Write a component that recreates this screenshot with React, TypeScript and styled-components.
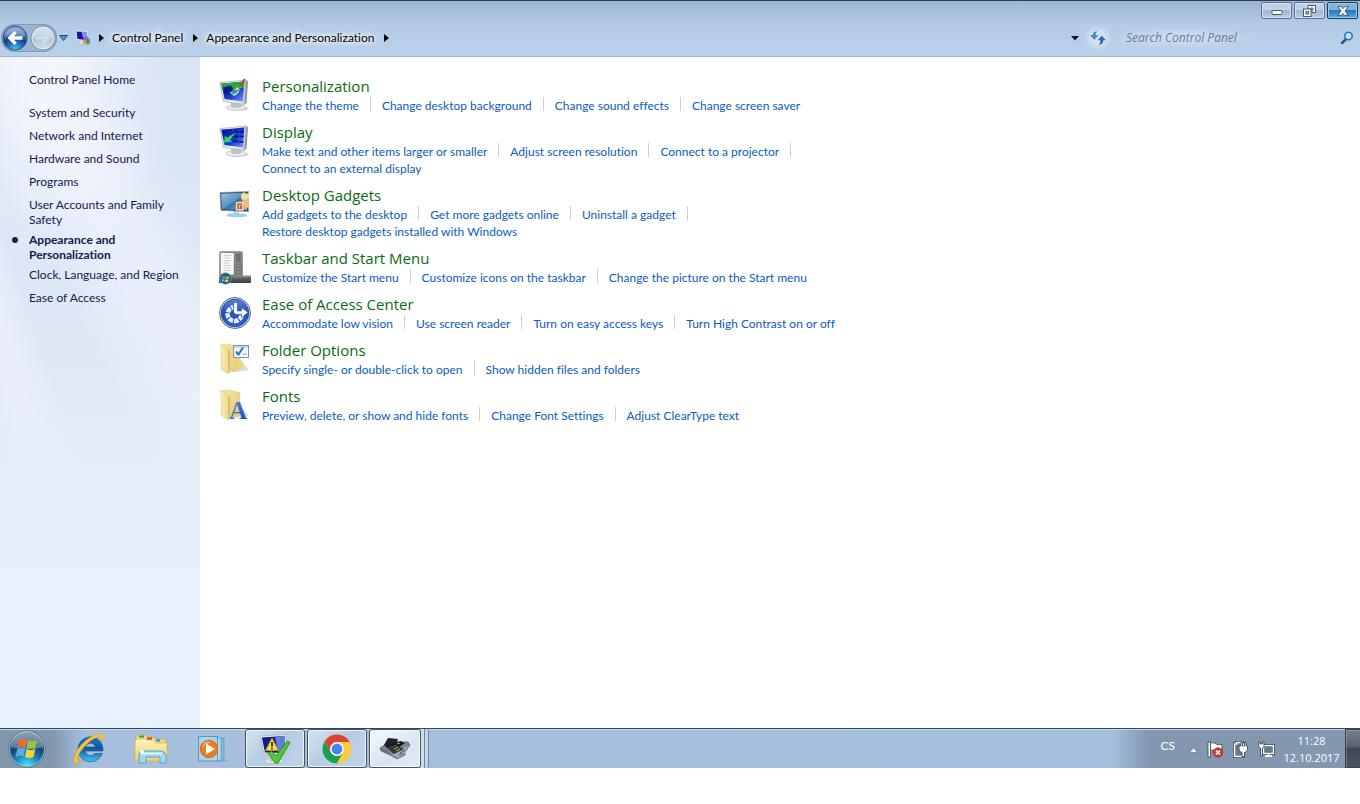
import React from "react";
import styled, { createGlobalStyle, css } from "styled-components";

const GlobalStyle = createGlobalStyle`
  * { box-sizing: border-box; }
  body { margin: 0; background: #fff; }
  body, button, input { font-family: Lato, "Open Sans", sans-serif; font-size: 12px; }
  body { font-variant-ligatures: none; }
  button { border: 0; padding: 0; background: none; color: inherit; }
  a { color: inherit; text-decoration: none; }
  a:hover { text-decoration: underline; }
  ul { list-style: none; margin: 0; padding: 0; }
  h2 { margin: 0; font-weight: 400; }
  svg { display: block; flex: none; overflow: visible; }
`;

const Page = styled.div`
  min-height: 100vh;
  display: flex;
  flex-direction: column;
  padding-bottom: 36px;
`;

const WindowHeader = styled.header`
  border-top: 1px solid #2f3a4c;
  border-bottom: 1px solid #a0b6d2;
  background: linear-gradient(#9ab4d2 0, #a9c1dd 12px, #b5cce7 24px, #b9d1ea 100%);
`;

const TitleBar = styled.div`
  display: flex;
  justify-content: flex-end;
  gap: 2px;
  height: 19px;
  padding: 1px 2px 0 0;
`;

const CaptionButton = styled.button<{ $close?: boolean }>`
  display: flex;
  align-items: center;
  justify-content: center;
  width: 31px;
  height: 17px;
  border: 1px solid ${(p) => (p.$close ? "#173c58" : "#5d728f")};
  border-radius: 2px;
  box-shadow: inset 0 0 0 1px ${(p) => (p.$close ? "#9ccbee" : "#d3e1f0")};
  background: ${(p) =>
    p.$close
      ? "linear-gradient(#7fb4dc 0 45%, #2b73b5 50%, #4fb0e8)"
      : "linear-gradient(#c0d2e7 0 45%, #a0b7d3 50%, #b7cce4)"};
`;

const NavBar = styled.nav`
  display: flex;
  align-items: center;
  height: 36px;
  padding: 0 6px 0 1px;
`;

const TravelButtons = styled.div`
  display: flex;
  margin-right: 1px;
  border-radius: 14px;
  background: #9db4d0;
  box-shadow: inset 0 0 0 1px #8199b8;
`;

const IconButton = styled.button`
  display: flex;
  align-items: center;
  justify-content: center;
`;

const RefreshButton = styled(IconButton)`
  margin-left: 11px;
  border-radius: 8px;
  background: rgba(255, 255, 255, 0.4);
  box-shadow: 0 0 5px 3px rgba(255, 255, 255, 0.4);
`;

const Crumbs = styled.div`
  display: flex;
  align-items: center;
  flex: 1;
  gap: 8px;
  margin-left: 6px;
  white-space: nowrap;
`;

const Crumb = styled.a`
  margin-right: 2px;
  color: #000;
  line-height: 16px;
  text-shadow: 0 0 4px #fff, 0 0 6px #fff, 0 0 8px #fff;
`;

const SearchBox = styled.label`
  display: flex;
  align-items: center;
  width: 234px;
  margin-left: 14px;
`;

const SearchInput = styled.input`
  flex: 1;
  min-width: 0;
  border: 0;
  outline: 0;
  padding: 0 6px;
  background: radial-gradient(ellipse 80px 11px at 60px 50%, rgba(255, 255, 255, 0.4), transparent);
  font-family: "Open Sans", sans-serif;
  line-height: 18px;
  &::placeholder {
    color: #6d7b8c;
    opacity: 1;
    font-style: italic;
  }
`;

const Body = styled.div`
  display: flex;
  flex: 1;
`;

const Sidebar = styled.aside`
  position: relative;
  isolation: isolate;
  width: 200px;
  flex: none;
  padding: 15px 12px 0 29px;
  color: #14194f;
  line-height: 15px;
  background: linear-gradient(#d9e4f5 0, #dfe9f6 45%, #e4eefa 62%, #e7f2fe 85%);
  &::before {
    content: "";
    position: absolute;
    inset: 0;
    z-index: -1;
    background:
      radial-gradient(ellipse 120px 190px at 50px 20px, rgba(246, 248, 253, 0.8), transparent),
      linear-gradient(72deg, transparent 22%, rgba(235, 239, 251, 0.8) 28% 32%, transparent 40%),
      linear-gradient(62deg, transparent 52%, rgba(234, 239, 250, 0.9) 66% 72%, transparent 84%);
    mask-image: linear-gradient(#000 50%, transparent 74%);
  }
`;

const SideList = styled.ul`
  display: flex;
  flex-direction: column;
  gap: 5px;
  margin-top: 18px;
`;

const SideItem = styled.li<{ $current?: boolean }>`
  position: relative;
  min-height: 18px;
  font-weight: ${(p) => (p.$current ? 700 : 400)};
  ${(p) =>
    p.$current &&
    css`
      max-width: 120px;
      &::before {
        content: "";
        position: absolute;
        left: -17px;
        top: 5px;
        width: 6px;
        height: 6px;
        border-radius: 50%;
        background: #1a1f52;
      }
    `}
`;

const Main = styled.main`
  flex: 1;
  min-width: 0;
  display: flex;
  flex-direction: column;
  gap: 8px;
  padding: 19px;
`;

const Category = styled.section`
  display: grid;
  grid-template-columns: 32px minmax(0, 640px);
  column-gap: 11px;
`;

const CategoryIcon = styled.div`
  padding-top: 3px;
  height: 38px;
`;

const CategoryTitle = styled.h2`
  font-family: "Open Sans", sans-serif;
  font-size: 15px;
  line-height: 21px;
  color: #0a6b12;
`;

const TaskList = styled.ul`
  display: flex;
  flex-wrap: wrap;
`;

const Task = styled.li`
  display: flex;
  height: 17px;
  line-height: 17px;
  color: #0a5cc0;
  white-space: nowrap;
  &:not(:last-child)::after {
    content: "";
    width: 1px;
    height: 14px;
    margin: 0 11px;
    background: #cfcfcf;
  }
`;

const Taskbar = styled.footer`
  display: flex;
  justify-content: space-between;
  height: 40px;
  border-top: 1px solid #34465e;
  box-shadow: inset 0 1px #c7d8ea;
  background: linear-gradient(90deg, #8296ae 0, #8296ae 52px, #a5bfdc 84px, #a5c0de calc(100% - 248px), #8397b0 calc(100% - 212px), #8397b0 100%);
`;

const TaskGroup = styled.div`
  display: flex;
  gap: 2px;
  padding-left: 1px;
`;

const TaskButton = styled.button<{ $open?: boolean; $front?: boolean; $start?: boolean }>`
  display: flex;
  align-items: center;
  justify-content: center;
  width: ${(p) => (p.$start || p.$front ? 52 : 60)}px;
  height: 39px;
  ${(p) => p.$start && "margin-right: 4px;"}
  ${(p) =>
    p.$open &&
    css`
      border: 1px solid #3f5269;
      border-radius: 3px;
      box-shadow: inset 0 0 0 1px rgba(255, 255, 255, 0.75);
      background: linear-gradient(135deg, #d6e3f1, #b6cce3 45%, #c0d3e8);
    `}
  ${(p) =>
    p.$front &&
    css`
      background: linear-gradient(150deg, #f6f9fc, #d9e4f0 60%, #e4ecf5);
      box-shadow: inset 0 0 0 1px #fff;
    `}
`;

const StackEdge = styled.span`
  width: 8px;
  height: 39px;
  margin-left: -2px;
  border-right: 1px solid #71879f;
  border-radius: 0 3px 3px 0;
  background: linear-gradient(90deg, #d0deec 3px, #6d839d 3px 4px, #c5d6e8 4px);
`;

const Tray = styled.div`
  display: flex;
  align-items: center;
  color: #fff;
`;

const Language = styled.button`
  margin: 0 14px 6px 0;
  line-height: 16px;
`;

const TrayIcons = styled.div`
  display: flex;
  align-items: center;
  gap: 9px;
  padding-top: 2px;
`;

const Clock = styled.time`
  width: 65px;
  margin-left: 4px;
  font-family: "Open Sans", sans-serif;
  font-size: 11px;
  text-align: center;
  line-height: 17px;
`;

const ShowDesktop = styled.button`
  width: 15px;
  height: 39px;
  margin-left: 1px;
  border: 1px solid #39434f;
  border-right: 0;
  box-shadow: inset 1px 1px rgba(255, 255, 255, 0.2);
  background: linear-gradient(#75808c 0, #58626e 45%, #3d4651 50%, #4b5561 100%);
`;

const BackIcon = () => (
  <svg width="28" height="28" viewBox="0 0 28 28">
    <defs>
      <radialGradient id="backFill" cx=".5" cy="1" r=".9">
        <stop offset="0" stopColor="#4fd2fa" />
        <stop offset=".35" stopColor="#1c76c8" />
        <stop offset=".6" stopColor="#123f8e" />
        <stop offset="1" stopColor="#7fa5d8" />
      </radialGradient>
    </defs>
    <circle cx="14" cy="14" r="12" fill="url(#backFill)" stroke="#2c4c7c" />
    <path d="M4 12A10.500 10.500 0 0 1 24 12Q14 16 4 12Z" fill="#fff" opacity=".25" />
    <path d="M6.500 14L13.500 7L15.800 9.300L13 12.300H21.500V15.700H13L15.800 18.700L13.500 21Z" fill="#fff" />
  </svg>
);

const ForwardIcon = () => (
  <svg width="28" height="28" viewBox="0 0 28 28">
    <defs>
      <linearGradient id="fwdFill" x1="0" y1="0" x2="0" y2="1">
        <stop offset="0" stopColor="#dbe6f1" />
        <stop offset=".48" stopColor="#c5d4e4" />
        <stop offset=".52" stopColor="#b3c5d9" />
        <stop offset="1" stopColor="#cfdeed" />
      </linearGradient>
    </defs>
    <circle cx="14" cy="14" r="12" fill="url(#fwdFill)" stroke="#7a8ca3" />
    <circle cx="14" cy="14" r="11" fill="none" stroke="#e6eef6" opacity=".8" />
    <path d="M21 14L14.500 7.500L12.500 9.500L15 12.300H6.500V15.700H15L12.500 18.500L14.500 20.500Z" fill="#d3dfeb" stroke="#b9c9da" strokeWidth=".5" />
  </svg>
);

const HistoryArrow = () => (
  <svg width="11" height="8" viewBox="0 0 11 8">
    <path d="M1.500 1.500H9.500L5.500 6.500Z" fill="#3d9fd0" stroke="#17507e" strokeLinejoin="round" />
  </svg>
);

const LocationIcon = () => (
  <svg width="16" height="16" viewBox="0 0 16 16">
    <path d="M4 11L10 10L12 14L4 14.500Z" fill="#dce1e8" stroke="#99a4b2" strokeWidth=".5" />
    <path d="M1 1L12.500 1.500L11.500 10.500L2 9.500Z" fill="#1418a8" stroke="#e7ebf2" />
    <path d="M6.500 2L12 2V6L8 8Z" fill="#7d92f2" />
    <circle cx="11" cy="9" r="2.700" fill="#a65fc2" />
    <circle cx="9.500" cy="12" r="2" fill="#e0a33c" />
    <path d="M12 8L15 10V13L12.500 15L11 12Z" fill="#36a560" />
    <path d="M12 8L15 10L12 12Z" fill="#dc4152" />
  </svg>
);

const CrumbArrow = () => (
  <svg width="5" height="8" viewBox="0 0 5 8">
    <path d="M0 0L5 4L0 8Z" fill="#000" />
  </svg>
);

const DropArrow = () => (
  <svg width="8" height="5" viewBox="0 0 8 5">
    <path d="M0 0H8L4 4.500Z" fill="#05104a" />
  </svg>
);

const RefreshIcon = () => (
  <svg width="16" height="14" viewBox="0 0 16 14">
    <path d="M6.500 .5Q3 1 3 4.500H.8L4.300 8.500L7.500 4.500H5.200Q5 2.500 6.500 .5Z" fill="#3f93d2" stroke="#2265a8" strokeWidth=".5" />
    <path d="M9.500 13.500Q13 13 13 9H15.200L11.700 5L8.500 9H10.800Q11 11.500 9.500 13.500Z" fill="#2f6dba" stroke="#1b4d93" strokeWidth=".5" />
  </svg>
);

const SearchIcon = () => (
  <svg width="14" height="14" viewBox="0 0 14 14">
    <path d="M6 8L2 12" stroke="#24589f" strokeWidth="2.500" strokeLinecap="round" />
    <circle cx="8.500" cy="5" r="3.700" fill="#c8e4f8" stroke="#2b73bd" strokeWidth="1.500" />
  </svg>
);

const MinimizeIcon = () => (
  <svg width="12" height="11" viewBox="0 0 12 11">
    <rect x="1" y="5.500" width="10" height="4" rx="1" fill="#fff" stroke="#4c5769" />
  </svg>
);

const RestoreIcon = () => (
  <svg width="13" height="12" viewBox="0 0 13 12">
    <path d="M5 .5H12.500V7.500H9V4H5Z" fill="#fff" stroke="#4c5769" />
    <path d="M7.500 3H10V5.500" fill="none" stroke="#4c5769" />
    <rect x=".5" y="4" width="7.500" height="7.500" fill="#fff" stroke="#4c5769" />
    <rect x="3" y="6.500" width="2.500" height="2.500" fill="#b7cce4" stroke="#4c5769" />
  </svg>
);

const CloseIcon = () => (
  <svg width="12" height="10" viewBox="0 0 12 10">
    <path d="M.8 .6H4.200L6 2.600L7.800 .6H11.200L8 5L11.200 9.400H7.800L6 7.400L4.200 9.400H.8L4 5Z" fill="#fff" stroke="#3b4f68" strokeWidth=".9" />
  </svg>
);

const MonitorStand = ({ id }: { id: string }) => (
  <>
    <defs>
      <linearGradient id={`${id}Frame`} x1="0" y1="0" x2="1" y2="0">
        <stop offset="0" stopColor="#d5d7da" />
        <stop offset=".5" stopColor="#f2f2f3" />
        <stop offset="1" stopColor="#d0d2d6" />
      </linearGradient>
      <linearGradient id={`${id}Screen`} x1="0" y1="0" x2="1" y2="1">
        <stop offset="0" stopColor="#060d8c" />
        <stop offset=".6" stopColor="#1a3ad2" />
        <stop offset="1" stopColor="#7fa6ff" />
      </linearGradient>
    </defs>
    <ellipse cx="19" cy="29.500" rx="11" ry="2" fill="#8f9298" opacity=".4" />
    <ellipse cx="17" cy="28.500" rx="10" ry="3" fill="#e9eaec" stroke="#b4b6ba" strokeWidth=".6" />
    <path d="M12 22H22L22.500 28Q17 30 12 28Z" fill="#c0c2c7" />
    <path d="M26 1L29 2L27.500 24L25 25.500Z" fill="#8f9299" />
    <path d="M.7 3.500L27 1L25.500 25.500L4.500 22.500Z" fill={`url(#${id}Frame)`} stroke="#a0a3a9" strokeWidth=".6" />
    <path d="M2.300 4.800L25.300 2.600L24 22.500L5.600 20Z" fill={`url(#${id}Screen)`} />
  </>
);

const PersonalizationIcon = () => (
  <svg width="32" height="32" viewBox="0 0 32 32">
    <MonitorStand id="pers" />
    <path d="M2.300 4.800L25.300 2.600L24.900 9Q22 8 19.500 12Q17 16 13 15L12 13L4 11Z" fill="#27a838" />
    <path d="M4 8.500L11.500 6.500L14 9L12.500 14L6 16Z" fill="#0d1a94" />
    <path d="M10.500 13L14 12.500L15.500 14.500L21 10Q19 17 14.500 17Z" fill="#8fe392" />
    <path d="M16 12L21 7" stroke="#e8ebf1" strokeWidth="2.200" />
    <path d="M19.500 8.500L25.500 .5" stroke="#a5473e" strokeWidth="1.700" strokeLinecap="round" />
    <path d="M12.500 15Q14 11 17.500 10.500L18.500 12Q17 14.500 12.500 15Z" fill="#5873cc" />
  </svg>
);

const DisplayIcon = () => (
  <svg width="32" height="32" viewBox="0 0 32 32">
    <MonitorStand id="disp" />
    <path d="M13 7.500L25 6.500M13 11.500L24.800 11.500M12 16L24.500 17" stroke="#081080" strokeWidth="1.500" />
    <path d="M14 4V8M20 4V20" stroke="#3458e0" strokeWidth=".7" />
    <path d="M5 17.500L6 11L8.200 12.700L17 7.500L11 14.700L13.500 16.500Z" fill="#38d47a" stroke="#1a9f65" strokeWidth=".5" />
  </svg>
);

const GadgetsIcon = () => (
  <svg width="32" height="32" viewBox="0 0 32 32">
    <defs>
      <linearGradient id="gadScreen" x1="0" y1="0" x2="1" y2="1">
        <stop offset="0" stopColor="#9cc7e4" />
        <stop offset=".5" stopColor="#5692c0" />
        <stop offset=".52" stopColor="#37729f" />
        <stop offset="1" stopColor="#7db7dc" />
      </linearGradient>
    </defs>
    <path d="M14 21H20V26H14Z" fill="#b9ddf2" />
    <path d="M9 26L25 26L28 28Q19 29.500 8 28Z" fill="#9fd2f2" stroke="#77b1d6" strokeWidth=".5" />
    <path d="M1 4.500L29.500 3.500V23.500L2 22.500Z" fill="#2b4a64" stroke="#8da4b5" strokeWidth=".7" />
    <path d="M2.200 5.700L28.200 4.800V22L3 21.200Z" fill="url(#gadScreen)" />
    <path d="M22 7L25 4L27 6L30 5V11L24 13L22 10Z" fill="#f5df8e" />
    <path d="M23 13L30 11V19L26 21Z" fill="#f1b887" />
    <rect x="17" y="14" width="7.500" height="8.500" fill="#fff5ee" stroke="#d9a58f" strokeWidth=".5" />
    <rect x="18.200" y="15.200" width="5" height="6" fill="#d9502b" />
    <path d="M19.500 19L22.500 16.500M20.500 20.500V16.500" stroke="#fbd4a2" strokeWidth=".8" />
  </svg>
);

const TaskbarIcon = () => (
  <svg width="32" height="32" viewBox="0 0 32 32">
    <defs>
      <linearGradient id="tbGray" x1="0" y1="0" x2="1" y2="1">
        <stop offset="0" stopColor="#9a9a9a" />
        <stop offset="1" stopColor="#646464" />
      </linearGradient>
      <linearGradient id="tbBar" x1="0" y1="0" x2="0" y2="1">
        <stop offset="0" stopColor="#9a9a9a" />
        <stop offset=".4" stopColor="#5c5c5c" />
        <stop offset="1" stopColor="#3f3f3f" />
      </linearGradient>
    </defs>
    <rect x=".5" y=".5" width="23" height="25" rx="1.500" fill="url(#tbGray)" stroke="#777" strokeWidth=".5" />
    <rect x="1.800" y="2" width="13" height="21.500" fill="#f6f6f6" />
    <path d="M5 4.500H12M5 7H11M5 9.500H12M5 12H10M5 14.500H12M5 17H11M5 19.500H12" stroke="#c3c6ca" strokeWidth=".8" />
    <rect x="16.500" y="2" width="5.500" height="21.500" fill="#707070" stroke="#a5a5a5" strokeWidth=".5" />
    <path d="M17.500 12H21M17.500 15H21M17.500 18H21M17.500 21H21" stroke="#b0b0b0" strokeWidth=".7" />
    <path d="M0 24.500H32V32H0Z" fill="url(#tbBar)" />
    <circle cx="6.500" cy="27.500" r="5.800" fill="#1b6288" stroke="#6cabc4" strokeWidth=".7" />
    <path d="M3.300 25.500Q5 24.500 6.200 25.300L5.800 27.600Q4.300 26.900 3 27.700Z" fill="#f0653a" />
    <path d="M6.900 25.500Q8.500 26 10.100 25.200L9.700 27.500Q8 28.400 6.500 27.700Z" fill="#9dd04b" />
    <path d="M2.800 28.500Q4.500 27.700 5.700 28.400L5.300 30.700Q4 30 2.700 30.500Z" fill="#5db4f0" />
    <path d="M6.400 28.600Q8 29.200 9.500 28.400L9.100 30.500Q7.500 31.400 6 30.700Z" fill="#fcd24b" />
  </svg>
);

const EaseIcon = () => (
  <svg width="32" height="32" viewBox="0 0 32 32">
    <defs>
      <linearGradient id="easeFill" x1="0" y1="0" x2="0" y2="1">
        <stop offset="0" stopColor="#5a83d8" />
        <stop offset=".5" stopColor="#2450b4" />
        <stop offset="1" stopColor="#2b62cf" />
      </linearGradient>
    </defs>
    <circle cx="16" cy="16" r="15.500" fill="#e1e5ee" stroke="#596783" />
    <circle cx="16" cy="16" r="13.800" fill="url(#easeFill)" stroke="#1c3c8c" strokeWidth=".8" />
    <path
      d="M22.500 18.500A7 7 0 1 1 14 10.300"
      fill="none"
      stroke="#e9eefb"
      strokeWidth="4.500"
      strokeDasharray="4.500 1"
    />
    <path d="M14.700 5.500H18.300V14H22.500V10.500L29 15.500L22.500 20.500V17.300H16.500L14.700 15.500Z" fill="#fff" stroke="#2a55b9" strokeWidth=".6" />
  </svg>
);

const FolderBase = ({ id }: { id: string }) => (
  <>
    <defs>
      <linearGradient id={`${id}Front`} x1="0" y1="0" x2="1" y2="0">
        <stop offset="0" stopColor="#f9efb9" />
        <stop offset="1" stopColor="#eed98a" />
      </linearGradient>
      <linearGradient id={`${id}Back`} x1="0" y1="0" x2="1" y2="1">
        <stop offset="0" stopColor="#f5e6a6" />
        <stop offset="1" stopColor="#e3c975" />
      </linearGradient>
    </defs>
    <path d="M12 29L24 20L30 27L19 29Z" fill="#8d8d85" opacity=".3" />
    <path d="M3 2L8 1L21 3.500V26L9 29.500Z" fill={`url(#${id}Back)`} stroke="#d6c07a" strokeWidth=".5" />
    <path d="M2 1.500L9.500 7V31L2.500 26.500Z" fill={`url(#${id}Front)`} stroke="#d6bd6a" strokeWidth=".5" />
    <path d="M9.500 7.500L11 6V28L9.500 31Z" fill="#d9bd63" />
  </>
);

const FolderOptionsIcon = () => (
  <svg width="32" height="32" viewBox="0 0 32 32">
    <FolderBase id="fo" />
    <path d="M20 15L24 19V25L19 27Z" fill="#edd67e" />
    <rect x="14.500" y="2.500" width="15" height="12" fill="#f6fafd" stroke="#8295a6" />
    <path d="M15 4H29" stroke="#bccbd8" strokeWidth="1.500" />
    <path d="M17 8.500L19.500 11.500L24 4.500" fill="none" stroke="#2a75bf" strokeWidth="2" />
    <path d="M23.500 11H28" stroke="#8fa3b4" />
  </svg>
);

const FontsIcon = () => (
  <svg width="32" height="32" viewBox="0 0 32 32">
    <FolderBase id="fn" />
    <defs>
      <linearGradient id="fnLetter" x1="0" y1="0" x2="1" y2="1">
        <stop offset="0" stopColor="#6ba0f0" />
        <stop offset="1" stopColor="#123e9e" />
      </linearGradient>
    </defs>
    <text x="10" y="30" fontFamily="Liberation Serif, serif" fontWeight="700" fontSize="25" fill="url(#fnLetter)">A</text>
  </svg>
);

const StartOrb = () => (
  <svg width="38" height="38" viewBox="0 0 38 38">
    <defs>
      <radialGradient id="orbFill" cx=".5" cy="1" r=".95">
        <stop offset="0" stopColor="#5cecff" />
        <stop offset=".35" stopColor="#1b8cbf" />
        <stop offset=".65" stopColor="#16446f" />
        <stop offset="1" stopColor="#5f7a94" />
      </radialGradient>
    </defs>
    <circle cx="19" cy="19" r="17.500" fill="url(#orbFill)" stroke="#b2d6e6" />
    <circle cx="19" cy="19" r="18.200" fill="none" stroke="#2e5474" strokeWidth=".6" />
    <path d="M3 17A16 16 0 0 1 35 17Q19 22 3 17Z" fill="#fff" opacity=".28" />
    <path d="M11 10.500Q15 7.500 19 9.500L17.500 17Q13.500 15.500 9.500 18Z" fill="#ee6b2f" />
    <path d="M20.300 10Q24.500 12 29 10L27.500 17.500Q23 20 18.800 17.700Z" fill="#93c83e" />
    <path d="M9.200 19.300Q13.300 17 17.200 18.500L15.700 26.200Q11.700 24.500 7.600 27Z" fill="#58aee6" />
    <path d="M18.500 19Q22.500 21.300 27.200 19L25.700 26.700Q21.300 29.300 17 26.800Z" fill="#fccf3b" />
  </svg>
);

const ExplorerE = () => (
  <svg width="34" height="34" viewBox="0 0 34 34">
    <defs>
      <linearGradient id="ieFill" x1="0" y1="0" x2="0" y2="1">
        <stop offset="0" stopColor="#2577c5" />
        <stop offset=".45" stopColor="#0f559f" />
        <stop offset="1" stopColor="#45c3ee" />
      </linearGradient>
    </defs>
    <path
      d="M31 19V17A12.500 12.500 0 1 0 30.300 21.500H22.800A5.300 5.300 0 0 1 13.300 19ZM13.500 15A5.200 5.200 0 0 1 23.500 15Z"
      fill="url(#ieFill)"
      fillRule="evenodd"
      stroke="#134f92"
      strokeWidth=".6"
    />
    <path d="M6 31Q-1 33 3 23Q8 11 19 5Q30 -1 32 4Q33 7 30 10Q31 5 27 5Q20 6 12 15Q5 23 5 28Q6 31 11 28Q8 31 6 31Z" fill="#f5c63b" stroke="#d39b22" strokeWidth=".5" />
  </svg>
);

const ExplorerFolder = () => (
  <svg width="34" height="32" viewBox="0 0 34 32">
    <defs>
      <linearGradient id="efFill" x1="0" y1="0" x2="0" y2="1">
        <stop offset="0" stopColor="#fbf3bb" />
        <stop offset="1" stopColor="#ecd271" />
      </linearGradient>
    </defs>
    <path d="M2 3Q2 2 3 2H11L13 4H19L21 6H30Q32 6 32 8V27H2Z" fill="#efd987" stroke="#c9a94d" strokeWidth=".7" />
    <rect x="5" y="2.500" width="5" height="2" fill="#2fa639" />
    <rect x="13" y="4.500" width="5" height="2" fill="#cc4128" />
    <rect x="22" y="6.500" width="4" height="2" fill="#2b8ed0" />
    <path d="M3 6H12L14 8H20L22 10H33V28H1V8Z" fill="url(#efFill)" stroke="#d0b259" strokeWidth=".7" />
    <path d="M12 8H19L20 9H12Z" fill="#fffce9" />
    <path d="M5 30V21Q5 18 8 18H26Q31 18 32 22V30H26V24H12V30Z" fill="#9edbf1" stroke="#4d9ec6" strokeWidth=".9" />
    <path d="M7 20.500H28" stroke="#e5f8ff" strokeWidth="1.500" />
    <circle cx="8" cy="19" r="2" fill="#fff" />
  </svg>
);

const MediaPlayer = () => (
  <svg width="32" height="28" viewBox="0 0 32 28">
    <path d="M21 4L27 3V24L21 27Z" fill="#85bada" stroke="#5a97bd" strokeWidth=".7" />
    <path d="M20 3L24 2.500V25L20 26Z" fill="#b6daec" stroke="#5a97bd" strokeWidth=".7" />
    <path d="M24 25L31 25L26 27Z" fill="#71869c" opacity=".5" />
    <rect x="1.500" y="1.500" width="19" height="24.500" fill="#a8d3e9" stroke="#5b9abf" />
    <circle cx="12" cy="14" r="8.700" fill="#ef7a21" stroke="#d15d12" strokeWidth=".8" />
    <path d="M5 12Q8 5 15 7Q8 9 5 12Z" fill="#fbb57c" />
    <path d="M9 8.500L18 14L9 19.500Z" fill="#fff" />
  </svg>
);

const WarningMonitor = () => (
  <svg width="32" height="32" viewBox="0 0 32 32">
    <ellipse cx="15" cy="28" rx="10" ry="2.500" fill="#dfe2e6" stroke="#a5a9b0" strokeWidth=".5" />
    <path d="M11 20H20V28H11Z" fill="#bcc0c7" />
    <path d="M1 3L27 1.500L27 22L5 21Z" fill="#e8eaed" stroke="#a4a8b0" strokeWidth=".6" />
    <path d="M2.800 4.500L25.500 3L25.500 20L6 19.500Z" fill="#0a1c96" />
    <path d="M16 3.600L25.500 3V20L19 19.800Z" fill="#5d7fd8" />
    <path d="M13 5L19.500 17.500H6.500Z" fill="#ffd93a" stroke="#b88e00" strokeWidth=".8" strokeLinejoin="round" />
    <path d="M13 9V13.500M13 14.800V16.200" stroke="#111" strokeWidth="1.600" />
    <path d="M9 20L12.500 18L17 23L28.500 8L31 9.500L19 30L16 30Z" fill="#4fc92e" stroke="#238312" strokeWidth=".8" />
  </svg>
);

const ChromeIcon = () => (
  <svg width="30" height="30" viewBox="0 0 30 30">
    <circle cx="15" cy="15" r="14.500" fill="#fccd3c" />
    <path d="M15 8H27.700A14.500 14.500 0 0 0 2.400 7.800L8.940 18.500A7 7 0 0 1 15 8Z" fill="#dc4437" />
    <path d="M8.940 18.500L2.400 7.800A14.500 14.500 0 0 0 14.700 29.500L21.060 18.500A7 7 0 0 1 8.940 18.500Z" fill="#1a9f5b" />
    <circle cx="15" cy="15" r="6.900" fill="#f4f5f6" />
    <circle cx="15" cy="15" r="5.400" fill="#4386f4" />
  </svg>
);

const DeviceIcon = () => (
  <svg width="32" height="24" viewBox="0 0 32 24">
    <path d="M1 11L10 5L29 5L31 8L26 15L26 18L18 22L13 19L2 14Z" fill="#7c858f" stroke="#515860" strokeWidth=".7" />
    <path d="M18 13L29 9L25 17L19 21L13 18Z" fill="#a3abb3" />
    <path d="M5 8L9 1L19 2L17 8L8 11Z" fill="#1e2124" />
    <path d="M8 11L17 8L25 12L15 17Z" fill="#34383d" />
    <path d="M15 7L21 4L26 6L20 10Z" fill="#16181b" />
    <path d="M18 7L21 6M15 12L19 10M17 14L21 12" stroke="#b5ba35" strokeWidth="1" />
    <path d="M2 12L10 16M21 16L26 13M20 18L24 16" stroke="#50575f" />
  </svg>
);

const TrayArrow = () => (
  <svg width="9" height="6" viewBox="0 0 9 6">
    <path d="M.5 5.500L4.500 .8L8.500 5.500Z" fill="#f7f9fb" stroke="#59687c" strokeWidth=".6" />
  </svg>
);

const FlagIcon = () => (
  <svg width="17" height="17" viewBox="0 0 17 17">
    <path d="M1 1H3.500V16H1Z" fill="#fff" stroke="#39434f" strokeWidth=".8" />
    <path d="M3.500 2Q6 1 8 2.500Q11 4.500 15 3.500V10Q11 11 8 9.500Q6 8.500 3.500 9.500Z" fill="#fff" stroke="#39434f" strokeWidth=".8" />
    <circle cx="11" cy="11.500" r="4.700" fill="#d93a2c" stroke="#9b1f17" strokeWidth=".7" />
    <path d="M9 9.500L13 13.500M13 9.500L9 13.500" stroke="#fff" strokeWidth="1.600" />
  </svg>
);

const PowerIcon = () => (
  <svg width="16" height="17" viewBox="0 0 16 17">
    <path d="M3.500 1.500H9V3H10.500V15.500H1.500V3H3.500Z" fill="#667890" stroke="#323d4b" strokeWidth="3" />
    <path d="M3.500 1.500H9V3H10.500V15.500H1.500V3H3.500Z" fill="#667890" stroke="#fff" strokeWidth="1.500" />
    <path d="M8 1.500V5H6V8Q6 11 9 11.500V15.500H11.500V11.500Q14.500 11 14.500 8V5H13V1.500H11.500V5H9.500V1.500Z" fill="#fff" stroke="#323d4b" strokeWidth=".8" />
  </svg>
);

const NetworkIcon = () => (
  <svg width="17" height="17" viewBox="0 0 17 17">
    <rect x="5.500" y="4.500" width="10" height="8" fill="#66788f" stroke="#323d4b" strokeWidth="3" />
    <rect x="5.500" y="4.500" width="10" height="8" fill="#66788f" stroke="#fff" strokeWidth="1.400" />
    <path d="M7 15H14" stroke="#fff" strokeWidth="1.800" />
    <path d="M10.500 13V15" stroke="#fff" strokeWidth="1.500" />
    <path d="M.8 .8V5Q.8 7 2.500 7V15H4.300V7Q6 7 6 5V.8H4.600V3H2.200V.8Z" fill="#fff" stroke="#323d4b" strokeWidth=".8" />
  </svg>
);

const sideLinks = [
  "System and Security",
  "Network and Internet",
  "Hardware and Sound",
  "Programs",
  "User Accounts and Family Safety",
  "Appearance and Personalization",
  "Clock, Language, and Region",
  "Ease of Access",
];

const categories = [
  {
    title: "Personalization",
    icon: <PersonalizationIcon />,
    tasks: ["Change the theme", "Change desktop background", "Change sound effects", "Change screen saver"],
  },
  {
    title: "Display",
    icon: <DisplayIcon />,
    tasks: [
      "Make text and other items larger or smaller",
      "Adjust screen resolution",
      "Connect to a projector",
      "Connect to an external display",
    ],
  },
  {
    title: "Desktop Gadgets",
    icon: <GadgetsIcon />,
    tasks: [
      "Add gadgets to the desktop",
      "Get more gadgets online",
      "Uninstall a gadget",
      "Restore desktop gadgets installed with Windows",
    ],
  },
  {
    title: "Taskbar and Start Menu",
    icon: <TaskbarIcon />,
    tasks: ["Customize the Start menu", "Customize icons on the taskbar", "Change the picture on the Start menu"],
  },
  {
    title: "Ease of Access Center",
    icon: <EaseIcon />,
    tasks: ["Accommodate low vision", "Use screen reader", "Turn on easy access keys", "Turn High Contrast on or off"],
  },
  {
    title: "Folder Options",
    icon: <FolderOptionsIcon />,
    tasks: ["Specify single- or double-click to open", "Show hidden files and folders"],
  },
  {
    title: "Fonts",
    icon: <FontsIcon />,
    tasks: ["Preview, delete, or show and hide fonts", "Change Font Settings", "Adjust ClearType text"],
  },
];

export default function App() {
  return (
    <Page>
      <GlobalStyle />
      <WindowHeader>
        <TitleBar>
          <CaptionButton aria-label="Minimize"><MinimizeIcon /></CaptionButton>
          <CaptionButton aria-label="Restore"><RestoreIcon /></CaptionButton>
          <CaptionButton aria-label="Close" $close><CloseIcon /></CaptionButton>
        </TitleBar>
        <NavBar>
          <TravelButtons>
            <IconButton aria-label="Back"><BackIcon /></IconButton>
            <IconButton aria-label="Forward"><ForwardIcon /></IconButton>
          </TravelButtons>
          <IconButton aria-label="Recent pages"><HistoryArrow /></IconButton>
          <Crumbs>
            <LocationIcon />
            <CrumbArrow />
            <Crumb href="#">Control Panel</Crumb>
            <CrumbArrow />
            <Crumb href="#">Appearance and Personalization</Crumb>
            <CrumbArrow />
          </Crumbs>
          <IconButton aria-label="Previous locations"><DropArrow /></IconButton>
          <RefreshButton aria-label="Refresh"><RefreshIcon /></RefreshButton>
          <SearchBox>
            <SearchInput placeholder="Search Control Panel" aria-label="Search Control Panel" />
            <SearchIcon />
          </SearchBox>
        </NavBar>
      </WindowHeader>
      <Body>
        <Sidebar>
          <a href="#">Control Panel Home</a>
          <SideList>
            {sideLinks.map((label) => (
              <SideItem key={label} $current={label.startsWith("Appearance")}>
                <a href="#">{label}</a>
              </SideItem>
            ))}
          </SideList>
        </Sidebar>
        <Main>
          {categories.map(({ title, icon, tasks }) => (
            <Category key={title}>
              <CategoryIcon>{icon}</CategoryIcon>
              <div>
                <CategoryTitle><a href="#">{title}</a></CategoryTitle>
                <TaskList>
                  {tasks.map((task) => (
                    <Task key={task}><a href="#">{task}</a></Task>
                  ))}
                </TaskList>
              </div>
            </Category>
          ))}
        </Main>
      </Body>
      <Taskbar>
        <TaskGroup>
          <TaskButton aria-label="Start" $start><StartOrb /></TaskButton>
          <TaskButton aria-label="Internet Explorer"><ExplorerE /></TaskButton>
          <TaskButton aria-label="Windows Explorer"><ExplorerFolder /></TaskButton>
          <TaskButton aria-label="Media Player"><MediaPlayer /></TaskButton>
          <TaskButton aria-label="Display settings" $open><WarningMonitor /></TaskButton>
          <TaskButton aria-label="Chrome" $open><ChromeIcon /></TaskButton>
          <TaskButton aria-label="Device" $open $front><DeviceIcon /></TaskButton>
          <StackEdge />
        </TaskGroup>
        <Tray>
          <Language>CS</Language>
          <TrayIcons>
            <TrayArrow />
            <FlagIcon />
            <PowerIcon />
            <NetworkIcon />
          </TrayIcons>
          <Clock>11:28<br />12.10.2017</Clock>
          <ShowDesktop aria-label="Show desktop" />
        </Tray>
      </Taskbar>
    </Page>
  );
}
